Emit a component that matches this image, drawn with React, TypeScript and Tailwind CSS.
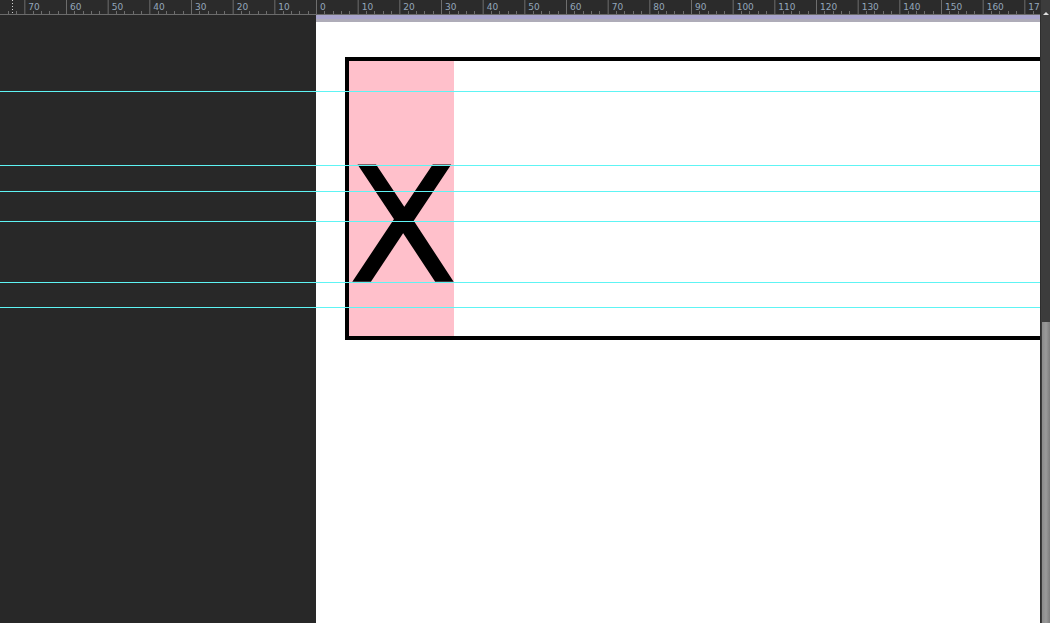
import React from "react";

const UNIT = 41.6667; // px per 10 units
const ORIGIN = 316;

function Ruler() {
  const majors: { x: number; label: string }[] = [];
  for (let i = -7; i <= 17; i++) {
    majors.push({ x: ORIGIN + i * UNIT, label: String(Math.abs(i * 10)) });
  }
  const minors: number[] = [];
  for (let i = -40; i <= 90; i++) {
    if (i % 5 !== 0) minors.push(ORIGIN + (i * UNIT) / 5);
  }
  return (
    <div className="h-[15px] bg-[#2b2b2b] relative overflow-hidden">
      <svg width="1040" height="15" className="block">
        {majors.map((m, i) => (
          <g key={i}>
            <line x1={m.x + 0.5} x2={m.x + 0.5} y1={0} y2={15} stroke="#6e6e6e" strokeWidth={1} />
            <text
              x={m.x + 4}
              y={10}
              fontSize={9}
              fontFamily="'DejaVu Sans', sans-serif"
              fill="#93a6ba"
            >
              {m.label}
            </text>
          </g>
        ))}
        {minors.map((x, i) => (
          <line key={i} x1={Math.round(x) + 0.5} x2={Math.round(x) + 0.5} y1={11} y2={15} stroke="#6e6e6e" strokeWidth={1} />
        ))}
        <line x1={0} x2={1040} y1={14.5} y2={14.5} stroke="#6b6b6b" strokeWidth={1} />
        <line x1={12.5} x2={12.5} y1={0} y2={15} stroke="#d0d0d0" strokeWidth={1} strokeDasharray="1 2" />
      </svg>
    </div>
  );
}

const guides = [91, 165, 191, 221, 282, 307];

export default function App() {
  return (
    <div className="w-[1050px] h-[623px] flex overflow-hidden bg-[#282828]">
      <div className="w-[1040px] shrink-0 min-w-0 flex flex-col relative overflow-hidden">
        <Ruler />
        <div className="flex-1 flex min-w-0">
          <div className="w-[316px] shrink-0 bg-[#282828]" />
          <div className="flex-1 min-w-0 flex flex-col overflow-hidden">
            <div className="h-[4px] bg-[#a9a5cc]" />
            <div className="h-[3px] bg-[#aeacb8]" />
            <div className="flex-1 bg-white pl-[29px] pt-[35px] overflow-hidden">
              <div className="w-[900px] h-[283px] border-4 border-black flex">
                <div
                  className="w-[105px] h-full bg-[#ffc0cb] pt-[86px] text-black text-[158px] leading-none [-webkit-text-stroke:1.5px_black]"
                  style={{ fontFamily: "'DejaVu Sans', sans-serif" }}
                >
                  X
                </div>
              </div>
            </div>
          </div>
        </div>
        {guides.map((y) => (
          <div
            key={y}
            className="absolute left-0 right-0 h-px bg-[#5ef4f4]"
            style={{ top: y }}
          />
        ))}
      </div>
      <div className="w-[10px] shrink-0 bg-[#3c3c3c] border-l border-[#2e2e2e] flex flex-col">
        <div className="h-[322px] flex justify-center pt-[12px]">
          <div className="w-0 h-0 border-l-[3px] border-r-[3px] border-b-[3px] border-l-transparent border-r-transparent border-b-[#e0e0e0]" />
        </div>
        <div className="flex-1 ml-[1px] bg-gradient-to-r from-[#8a8a8a] via-[#9a9a9a] to-[#7e7e7e]" />
      </div>
    </div>
  );
}
